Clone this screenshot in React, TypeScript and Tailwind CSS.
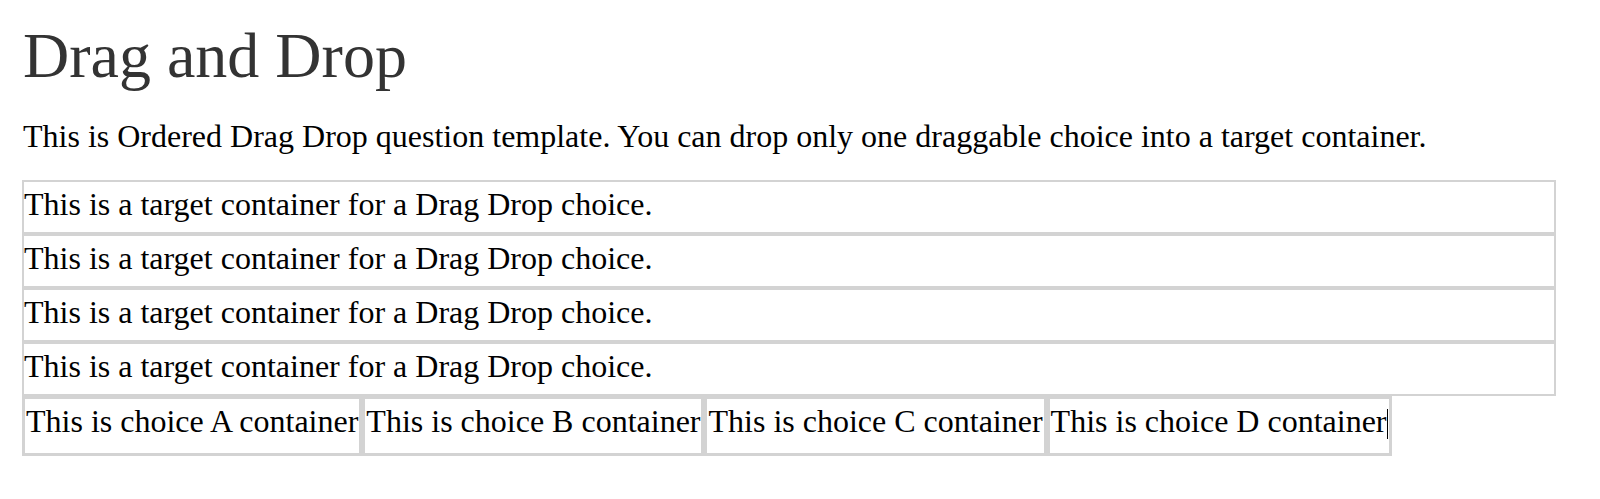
export default function App() {
  const targets = [0, 1, 2, 3];
  const choices = ["A", "B", "C", "D"];
  return (
    <div className="min-h-[499px] bg-white pl-[22px] pt-[24px] font-['Liberation_Serif','Times_New_Roman',serif] text-black">
      <h1 className="text-[64px] leading-[64px] text-[#333] pl-[1px]">Drag and Drop</h1>
      <p className="mt-[30px] text-[32px] leading-[36px] pl-[1px]">
        This is Ordered Drag Drop question template. You can drop only one draggable choice into a target container.
      </p>
      <div className="mt-[26px] w-[1534px]">
        {targets.map((t) => (
          <div
            key={t}
            className="h-[54px] border-2 border-[#d3d3d3] text-[32px] leading-[45px] whitespace-nowrap"
          >
            This is a target container for a Drag Drop choice.
          </div>
        ))}
      </div>
      <div className="flex">
        {choices.map((c, i) => (
          <div
            key={c}
            className="h-[60px] border-[3.5px] border-[#d3d3d3] px-[1px] text-[32px] leading-[44px] whitespace-nowrap"
          >
            This is choice {c} container
            {i === 3 && (
              <span className="inline-block w-[1.5px] h-[30px] bg-black align-[-7px]"></span>
            )}
          </div>
        ))}
      </div>
    </div>
  );
}
